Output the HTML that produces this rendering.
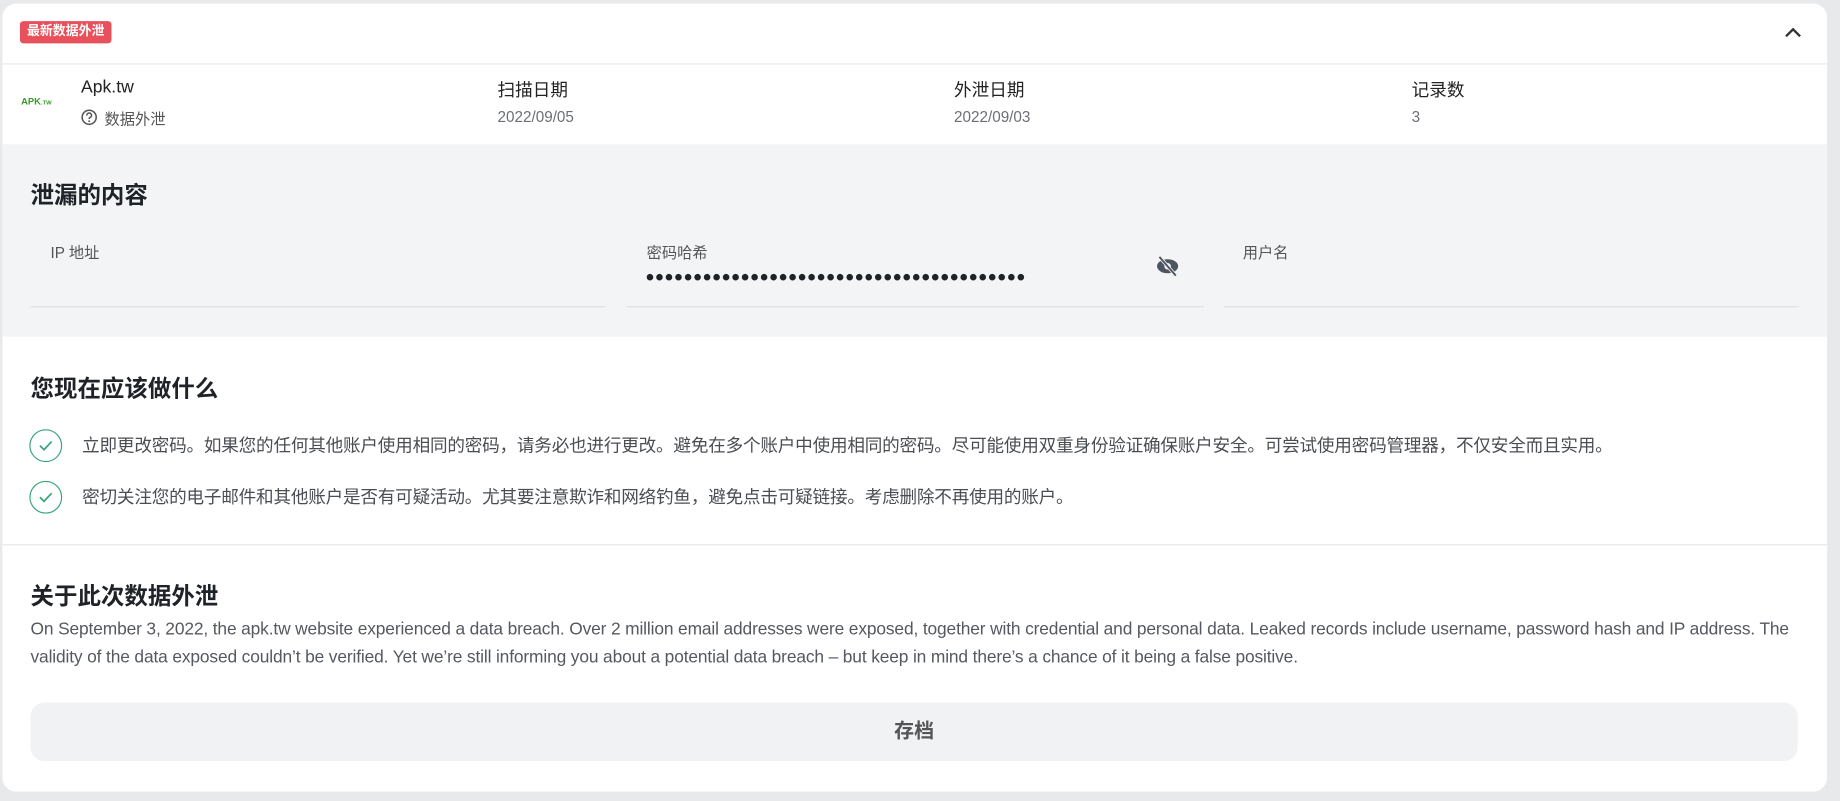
<!DOCTYPE html>
<html><head><meta charset="utf-8"><style>
*{box-sizing:border-box;margin:0;padding:0}
html,body{width:1840px;height:801px;overflow:hidden;background:#e8e9eb}
body{font-family:"Liberation Sans","Noto Sans CJK SC",sans-serif;color:#1f2328}
#w{width:1568px;height:683px;transform:scale(1.17347,1.1728);transform-origin:0 0;position:relative}
.card{position:absolute;left:2px;top:3px;width:1555px;height:672px;background:#fff;border-radius:12px;overflow:hidden}
.a{position:absolute;white-space:nowrap}
.badge{left:15px;top:15px;height:19px;padding:0 6px;background:#e8505b;color:#fff;font-size:11px;font-weight:bold;line-height:19px;border-radius:3px}
.lbl{font-size:15px;color:#222}
.val{font-size:13px;color:#6b6f75}
.h{font-size:20px;font-weight:bold;color:#1f2328}
.fl{font-size:13px;color:#555}
.line{position:absolute;height:1px;background:#dfe1e4}
.t{font-size:15px;color:#4a4d52}
.chk{position:absolute;width:28px;height:28px;border:1.5px solid #3aa57a;border-radius:50%}
</style></head><body><div id="w">
<div class="card">
<div class="a badge">最新数据外泄</div>
<svg class="a" style="left:1517px;top:19px" width="18" height="12" viewBox="0 0 18 12"><path d="M3 9 L9 3 L15 9" fill="none" stroke="#333" stroke-width="2"/></svg>
<div class="line" style="left:0;top:51px;width:1555px;background:#e6e7e9"></div>
<div class="a" style="left:16px;top:79px;width:32px;height:10px;font-size:8px;font-weight:bold;color:#3a9a2a;line-height:10px">APK<span style="font-size:5px">.TW</span></div>
<div class="a lbl" style="left:67px;top:63px">Apk.tw</div>
<svg class="a" style="left:67px;top:90px" width="14" height="14" viewBox="0 0 14 14"><circle cx="7" cy="7" r="6" fill="none" stroke="#555" stroke-width="1.3"/><path d="M5 5.5a2 2 0 1 1 2.5 1.8c-.5.2-.5.6-.5 1.2" fill="none" stroke="#555" stroke-width="1.3"/><circle cx="7" cy="10.3" r=".8" fill="#555"/></svg>
<div class="a" style="left:87px;top:88px;font-size:13px;color:#555">数据外泄</div>
<div class="a lbl" style="left:422px;top:63px">扫描日期</div><div class="a val" style="left:422px;top:89px">2022/09/05</div>
<div class="a lbl" style="left:811px;top:63px">外泄日期</div><div class="a val" style="left:811px;top:89px">2022/09/03</div>
<div class="a lbl" style="left:1201px;top:63px">记录数</div><div class="a val" style="left:1201px;top:89px">3</div>
<div class="a" style="left:0;top:120px;width:1555px;height:164px;background:#f3f4f6"></div>
<div class="a h" style="left:24px;top:147px">泄漏的内容</div>
<div class="a fl" style="left:41px;top:202px">IP 地址</div>
<div class="a fl" style="left:549px;top:202px">密码哈希</div>
<div class="a" style="left:548px;top:225px;font-size:13px;color:#1f2328;letter-spacing:0.25px">●●●●●●●●●●●●●●●●●●●●●●●●●●●●●●●●●●●●●●●●</div>
<svg class="a" style="left:983px;top:215px" width="20" height="18" viewBox="0 0 20 18"><ellipse cx="10" cy="9" rx="9" ry="6" fill="#4c5560"/><circle cx="10" cy="9" r="2.8" fill="#f3f4f6"/><path d="M3 1 L17 17" stroke="#f3f4f6" stroke-width="3"/><path d="M3 1 L17 17" stroke="#4c5560" stroke-width="1.6"/></svg>
<div class="a fl" style="left:1057px;top:202px">用户名</div>
<div class="line" style="left:24px;top:258px;width:490px"></div>
<div class="line" style="left:532px;top:258px;width:492px"></div>
<div class="line" style="left:1041px;top:258px;width:490px"></div>
<div class="a h" style="left:24px;top:312px">您现在应该做什么</div>
<div class="chk" style="left:23px;top:363px"></div>
<svg class="a" style="left:30px;top:370px" width="14" height="14" viewBox="0 0 14 14"><path d="M2 7 L5.5 10.5 L12 3.5" fill="none" stroke="#3aa57a" stroke-width="1.5"/></svg>
<div class="a t" style="left:68px;top:366px;letter-spacing:-0.18px">立即更改密码。如果您的任何其他账户使用相同的密码，请务必也进行更改。避免在多个账户中使用相同的密码。尽可能使用双重身份验证确保账户安全。可尝试使用密码管理器，不仅安全而且实用。</div>
<div class="chk" style="left:23px;top:407px"></div>
<svg class="a" style="left:30px;top:414px" width="14" height="14" viewBox="0 0 14 14"><path d="M2 7 L5.5 10.5 L12 3.5" fill="none" stroke="#3aa57a" stroke-width="1.5"/></svg>
<div class="a t" style="left:68px;top:410px;letter-spacing:-0.18px">密切关注您的电子邮件和其他账户是否有可疑活动。尤其要注意欺诈和网络钓鱼，避免点击可疑链接。考虑删除不再使用的账户。</div>
<div class="line" style="left:0;top:461px;width:1555px;background:#e6e7e9"></div>
<div class="a h" style="left:24px;top:489px">关于此次数据外泄</div>
<div class="a t" style="left:24px;top:522px;width:1530px;white-space:normal;line-height:24px;color:#55595f;font-size:14.8px;letter-spacing:-0.12px">On September 3, 2022, the apk.tw website experienced a data breach. Over 2 million email addresses were exposed, together with credential and personal data. Leaked records include username, password hash and IP address. The validity of the data exposed couldn’t be verified. Yet we’re still informing you about a potential data breach – but keep in mind there’s a chance of it being a false positive.</div>
<div class="a" style="left:24px;top:596px;width:1506px;height:50px;background:#f1f2f4;border-radius:12px;text-align:center;line-height:50px;font-size:17px;font-weight:bold;color:#555">存档</div>
</div>
</div></body></html>
